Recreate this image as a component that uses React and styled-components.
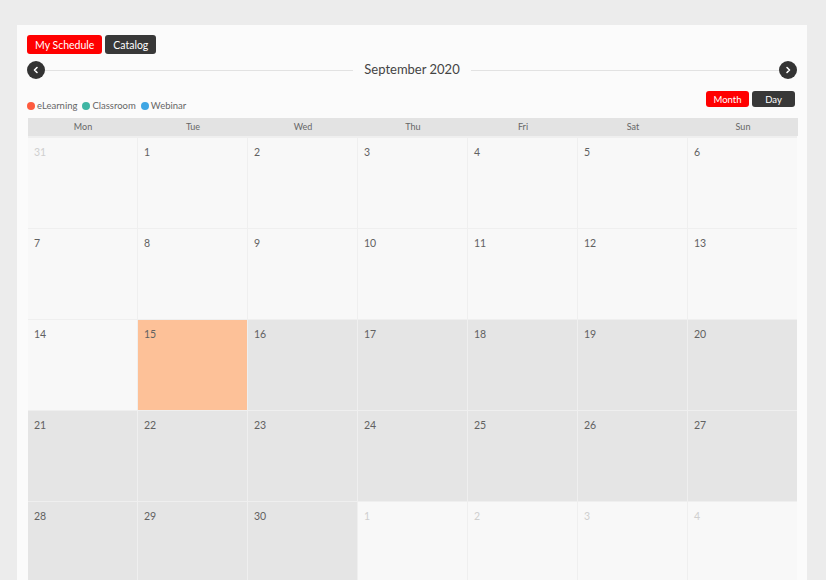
import React from "react";
import styled, { createGlobalStyle } from "styled-components";

const GlobalStyle = createGlobalStyle`
  body {
    margin: 0;
    background: #ececec;
    font-family: "Lato", "Noto Sans", sans-serif;
  }
`;

const Card = styled.div`
  width: 790px;
  margin: 25px 0 0 17px;
  background: #fbfbfb;
  padding: 10px 10px 0;
  box-sizing: border-box;
`;

const Tabs = styled.div`
  display: flex;
  gap: 3px;
`;

const Button = styled.button`
  border: none;
  border-radius: 3px;
  height: 19px;
  padding: 0 ${(p) => p.$pad || 8}px;
  font-family: inherit;
  font-size: 10.5px;
  color: #fff;
  background: ${(p) => (p.$active ? "#ff0000" : "#383838")};
  cursor: pointer;
`;

const NavRow = styled.div`
  display: flex;
  align-items: center;
  margin-top: 7px;
  height: 18px;
`;

const Arrow = styled.div`
  width: 18px;
  height: 18px;
  border-radius: 50%;
  background: #333;
  display: flex;
  align-items: center;
  justify-content: center;
  flex: none;
`;

const Line = styled.div`
  flex: 1;
  height: 1px;
  background: #e2e2e2;
`;

const Title = styled.div`
  padding: 0 11px;
  font-size: 13px;
  color: #444;
  margin-top: -3px;
`;

const ToolRow = styled.div`
  display: flex;
  justify-content: space-between;
  align-items: flex-end;
  margin-top: 12px;
  padding-bottom: 11px;
`;

const Legend = styled.div`
  display: flex;
  gap: 5px;
  font-size: 9.5px;
  color: #666;
  margin-bottom: -4px;
`;

const LegendItem = styled.span`
  display: flex;
  align-items: center;
  gap: 2px;
`;

const Dot = styled.span`
  width: 8px;
  height: 8px;
  border-radius: 50%;
  background: ${(p) => p.$color};
`;

const ViewSwitch = styled.div`
  display: flex;
  gap: 3px;
  margin-right: 2px;
`;

const ViewButton = styled(Button)`
  height: 16px;
  width: 43px;
  font-size: 9.5px;
  padding: 0;
`;

const Grid = styled.div`
  display: grid;
  grid-template-columns: repeat(7, 1fr);
  column-gap: 1px;
  row-gap: 1px;
  background: #efefef;
  margin-left: 1px;
`;

const HeadCell = styled.div`
  height: 18px;
  line-height: 18px;
  text-align: center;
  font-size: 9px;
  color: #666;
  background: #e3e3e3;
  margin-bottom: 1px;
  margin-right: -1px;
`;

const DayCell = styled.div`
  height: 90px;
  padding: 8px 6px;
  box-sizing: border-box;
  font-size: 10.5px;
  color: ${(p) => (p.$other ? "#cfcfcf" : "#616161")};
  background: ${(p) =>
    p.$today ? "#fdc198" : p.$shade ? "#e5e5e5" : "#f8f8f8"};
`;

const days = ["Mon", "Tue", "Wed", "Thu", "Fri", "Sat", "Sun"];

const cells = [
  { n: 31, other: true },
  ...Array.from({ length: 30 }, (_, i) => ({ n: i + 1 })),
  { n: 1, other: true },
  { n: 2, other: true },
  { n: 3, other: true },
  { n: 4, other: true },
];

const Chevron = ({ dir }) => (
  <svg width="8" height="8" viewBox="0 0 8 8">
    <path
      d={dir === "left" ? "M5 1.5 L2.5 4 L5 6.5" : "M3 1.5 L5.5 4 L3 6.5"}
      stroke="#fff"
      strokeWidth="1.6"
      fill="none"
      strokeLinecap="round"
      strokeLinejoin="round"
    />
  </svg>
);

const App = () => {
  return (
    <>
      <GlobalStyle />
      <Card>
        <Tabs>
          <Button $active>My Schedule</Button>
          <Button>Catalog</Button>
        </Tabs>

        <NavRow>
          <Arrow>
            <Chevron dir="left" />
          </Arrow>
          <Line />
          <Title>September 2020</Title>
          <Line />
          <Arrow>
            <Chevron dir="right" />
          </Arrow>
        </NavRow>

        <ToolRow>
          <Legend>
            <LegendItem>
              <Dot $color="#fe5b3e" /> eLearning
            </LegendItem>
            <LegendItem>
              <Dot $color="#3fb6a4" /> Classroom
            </LegendItem>
            <LegendItem>
              <Dot $color="#3fa6e4" /> Webinar
            </LegendItem>
          </Legend>
          <ViewSwitch>
            <ViewButton $active>Month</ViewButton>
            <ViewButton>Day</ViewButton>
          </ViewSwitch>
        </ToolRow>

        <Grid>
          {days.map((d) => (
            <HeadCell key={d}>{d}</HeadCell>
          ))}
          {cells.map((c, i) => (
            <DayCell
              key={i}
              $other={c.other}
              $today={!c.other && c.n === 15}
              $shade={!c.other && c.n > 15}
            >
              {c.n}
            </DayCell>
          ))}
        </Grid>
      </Card>
    </>
  );
};

export default App;
